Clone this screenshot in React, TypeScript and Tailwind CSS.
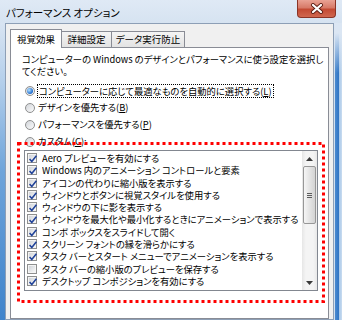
import React from "react";

const items: [string, boolean][] = [
  ["Aero プレビューを有効にする", true],
  ["Windows 内のアニメーション コントロールと要素", true],
  ["アイコンの代わりに縮小版を表示する", true],
  ["ウィンドウとボタンに視覚スタイルを使用する", true],
  ["ウィンドウの下に影を表示する", true],
  ["ウィンドウを最大化や最小化するときにアニメーションで表示する", true],
  ["コンボ ボックスをスライドして開く", true],
  ["スクリーン フォントの縁を滑らかにする", true],
  ["タスク バーとスタート メニューでアニメーションを表示する", true],
  ["タスク バーの縮小版のプレビューを保存する", false],
  ["デスクトップ コンポジションを有効にする", true],
];

function Check({ on }: { on: boolean }) {
  return (
    <span className="w-[10px] h-[10px] shrink-0 border border-[#8e8f8f] p-px bg-[#f4f4f4]">
      <span className="relative block w-full h-full bg-[linear-gradient(135deg,#cfd3d8,#f8f8f8)]">
        {on && (
          <svg className="absolute left-[-1px] top-[-1px]" width="10" height="10" viewBox="0 0 10 10">
            <path d="M1.6 5 L3.8 7.6 L8.4 1.8" fill="none" stroke="#22449a" strokeWidth="1.6" />
          </svg>
        )}
      </span>
    </span>
  );
}

function Radio({ on }: { on?: boolean }) {
  return (
    <span className="w-[10px] h-[10px] shrink-0 rounded-full border border-[#8e8f8f] bg-[linear-gradient(135deg,#d2d5da,#fbfbfb)] flex items-center justify-center">
      {on && (
        <span className="w-[6px] h-[6px] rounded-full bg-[radial-gradient(circle_at_35%_35%,#b5e2ff,#1b6ad0_70%)]" />
      )}
    </span>
  );
}

function CloseButton() {
  return (
    <div className="ml-auto mr-[6px] w-[39px] h-[18px] rounded-b-[4px] border border-t-0 border-[#8a3426] bg-[linear-gradient(to_bottom,#e9a294_0%,#d77a68_45%,#c34a33_55%,#d0674f_100%)] flex items-center justify-center">
      <svg width="14" height="11" viewBox="0 0 14 11">
        <path d="M3 2 L11 9 M11 2 L3 9" stroke="#5b1c12" strokeWidth="4" strokeLinecap="round" />
        <path d="M3 2 L11 9 M11 2 L3 9" stroke="#ffffff" strokeWidth="2.3" strokeLinecap="round" />
      </svg>
    </div>
  );
}

export default function App() {
  return (
    <div className="relative w-[342px] h-[320px] overflow-hidden flex flex-col bg-[#dbe6f3] text-black font-['Noto_Sans_CJK_JP',sans-serif] [font-feature-settings:'palt']">
      <div className="h-[23px] shrink-0 flex items-start pl-[6px] bg-[linear-gradient(to_bottom,#dfe9f5,#d6e3f1)]">
        <span className="mt-[7px] text-[10.5px] leading-[12px]">パフォーマンス オプション</span>
        <CloseButton />
      </div>

      <div className="flex flex-1 min-h-0">
        <div className="w-[5px] shrink-0 bg-[linear-gradient(to_bottom,#d8e4f2_0%,#b4cfeb_20%,#6ea4da_50%,#3f83cb_100%)]" />

        <div className="flex-1 min-w-0 bg-[#f0f0f0] border border-[#8d9fb6] pt-[5px] px-[4px] flex flex-col">
          <div className="flex items-end h-[19px] -mb-px relative z-10 text-[9.5px]">
            <div className="w-[52px] h-[19px] bg-white border border-b-0 border-[#898c95] flex items-center justify-center pt-px">
              視覚効果
            </div>
            <div className="w-[50px] h-[16px] mb-px bg-[linear-gradient(to_bottom,#f4f4f4,#e3e3e3)] border border-l-0 border-b-0 border-[#898c95] flex items-center justify-center">
              詳細設定
            </div>
            <div className="w-[73px] h-[16px] mb-px bg-[linear-gradient(to_bottom,#f4f4f4,#e3e3e3)] border border-l-0 border-b-0 border-[#898c95] flex items-center justify-center">
              データ実行防止
            </div>
          </div>

          <div className="flex-1 bg-white border border-[#898c95] pt-[5px] pl-[11px] text-[9.3px]">
            <div className="whitespace-nowrap">
              <p className="h-[12px] leading-[12px] overflow-hidden">
                コンピューターの Windows のデザインとパフォーマンスに使う設定を選択し
              </p>
              <p className="h-[12px] leading-[12px] overflow-hidden">てください。</p>
            </div>

            <div className="mt-[5px] pl-[3px] flex flex-col">
              <div className="h-[17px] flex items-center gap-[2px]">
                <Radio on />
                <span className="border border-dotted border-black px-px leading-[12px]">
                  コンピューターに応じて最適なものを自動的に選択する(<span className="underline">L</span>)
                </span>
              </div>
              <div className="h-[17px] flex items-center gap-[3px]">
                <Radio />
                <span>
                  デザインを優先する(<span className="underline">B</span>)
                </span>
              </div>
              <div className="h-[17px] flex items-center gap-[3px]">
                <Radio />
                <span>
                  パフォーマンスを優先する(<span className="underline">P</span>)
                </span>
              </div>
              <div className="h-[17px] flex items-center gap-[3px]">
                <Radio />
                <span>
                  カスタム(<span className="underline">C</span>):
                </span>
              </div>
            </div>

            <div className="ml-[2px] w-[294px] h-[141px] border border-[#828790] flex">
              <div className="flex-1 min-w-0 pt-px pl-[2px]">
                {items.map(([label, on]) => (
                  <div key={label} className="h-[12.27px] flex items-center gap-[5px] whitespace-nowrap">
                    <Check on={on} />
                    <span className="block h-[12px] leading-[12px] overflow-hidden">{label}</span>
                  </div>
                ))}
              </div>
              <div className="w-[15px] shrink-0 flex flex-col bg-[linear-gradient(to_right,#e6e6e6,#f4f4f4_25%,#f4f4f4_75%,#e8e8e8)]">
                <div className="h-[15px] flex items-center justify-center">
                  <svg width="7" height="4" viewBox="0 0 7 4">
                    <path d="M0 4 L3.5 0 L7 4 Z" fill="#3a3a3a" />
                  </svg>
                </div>
                <div className="mx-px h-[58px] rounded-[2px] border border-[#979797] bg-[linear-gradient(to_right,#f6f6f6,#e4e4e4_50%,#d3d3d3)] flex flex-col items-center justify-center gap-px">
                  <span className="w-[5px] h-px bg-[#5c5c5c]" />
                  <span className="w-[5px] h-px bg-[#5c5c5c]" />
                  <span className="w-[5px] h-px bg-[#5c5c5c]" />
                </div>
                <div className="flex-1" />
                <div className="h-[15px] flex items-center justify-center">
                  <svg width="7" height="4" viewBox="0 0 7 4">
                    <path d="M0 0 L3.5 4 L7 0 Z" fill="#3a3a3a" />
                  </svg>
                </div>
              </div>
            </div>
          </div>
        </div>

        <div className="w-[8px] shrink-0 bg-[linear-gradient(to_bottom,#dbe6f3_0px,#dbe6f3_10px,rgba(219,230,243,0)_50px),linear-gradient(to_right,#d2dfed_0px,#d2dfed_1px,#4b8bd1_1px,#2f73c2_5px,#a6c6e8_5px,#c9dcf0_8px)]" />
      </div>

      <svg className="absolute left-[17px] top-[142px]" width="308" height="161" viewBox="0 0 308 161">
        <rect x="1.5" y="1.5" width="305" height="158" fill="none" stroke="#ff0000" strokeWidth="3" strokeDasharray="3 3" />
      </svg>
    </div>
  );
}
